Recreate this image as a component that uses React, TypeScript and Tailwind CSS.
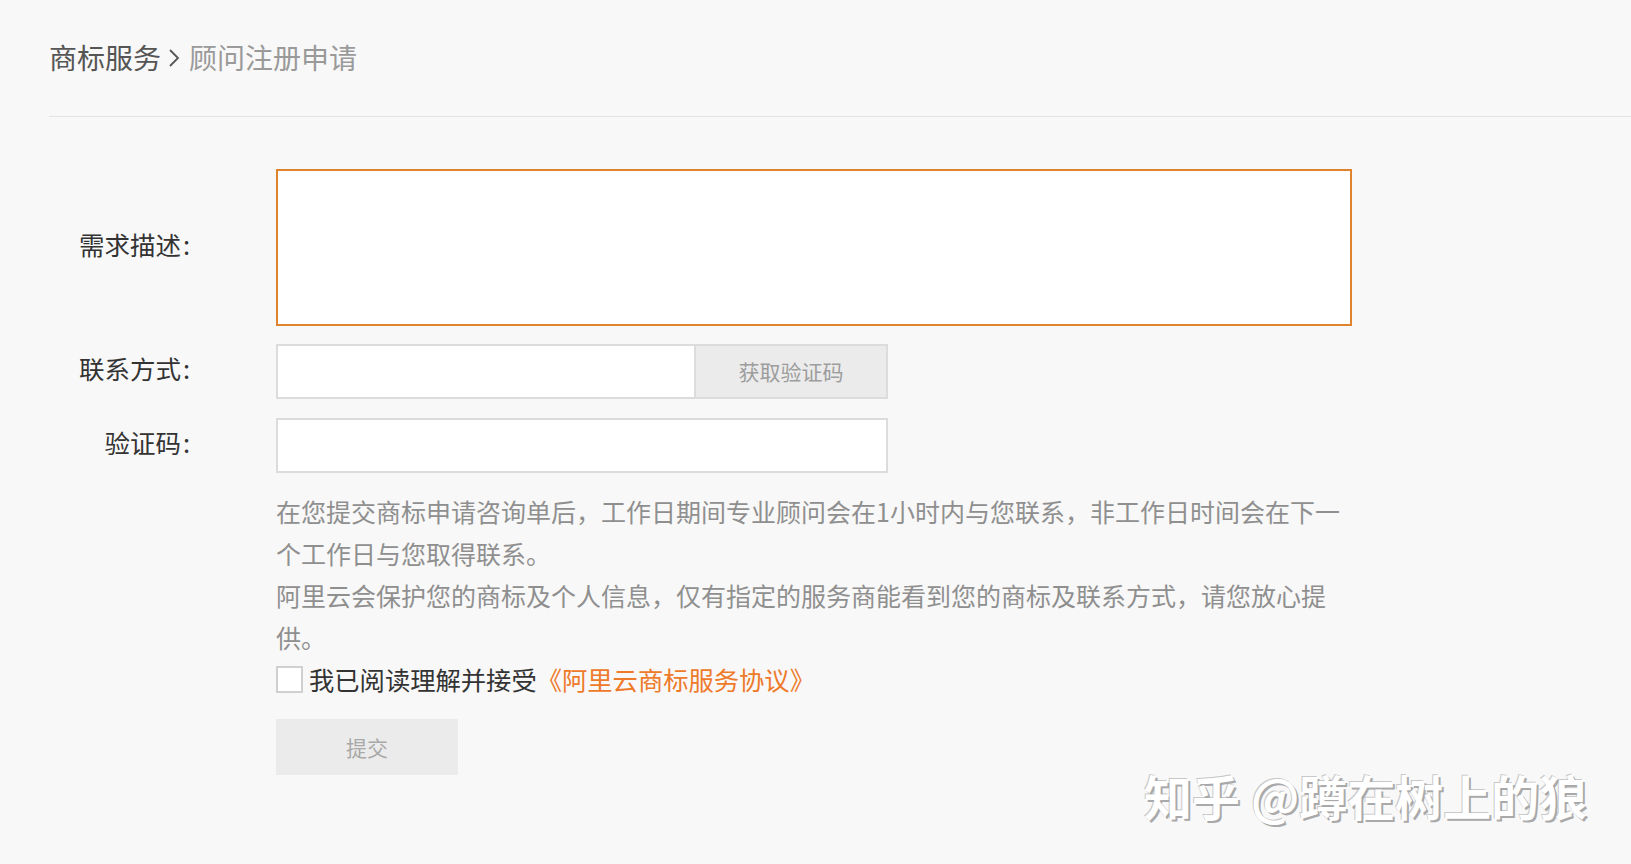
import React from "react";

const font = "font-['Microsoft_YaHei','Noto_Sans_CJK_SC',sans-serif]";

export default function App() {
  return (
    <div className={`relative min-h-[864px] w-full bg-[#f8f8f8] ${font} overflow-hidden`}>
      {/* header */}
      <div className="pl-[49px]">
        <div className="flex h-[116px] items-center pb-[2px] text-[28px] leading-none">
          <span className="text-[#555]">商标服务</span>
          <span className="ml-[7px] mr-[9px] text-[#555]">
            <svg width="12" height="22" viewBox="0 0 12 22" className="mt-[2px]">
              <path d="M2 3 L10 11 L2 19" fill="none" stroke="#555" strokeWidth="1.8" />
            </svg>
          </span>
          <span className="text-[#9a9a9a]">顾问注册申请</span>
        </div>
        <div className="h-px bg-[#e3e3e3]" />
      </div>

      {/* form */}
      <div className="mt-[52px] pl-[49px]">
        <div className="grid grid-cols-[227px_auto] gap-y-[18px]">
          <div className="flex items-center justify-end pb-[7px] pr-[86px] text-[25.5px] text-[#333]">需求描述<span className="ml-[2px]">:</span></div>
          <div className="h-[157px] w-[1076px] border-2 border-[#e0832f] bg-white" />

          <div className="flex items-center justify-end pb-[6px] pr-[86px] text-[25.5px] text-[#333]">联系方式<span className="ml-[2px]">:</span></div>
          <div className="flex h-[55px] w-[612px]">
            <div className="h-full w-[418px] border-2 border-r-0 border-[#dcdcdc] bg-white" />
            <div className="flex h-full flex-1 items-center justify-center border-2 border-[#dcdcdc] bg-[#ebebeb] text-[21px] text-[#9d9d9d]">
              获取验证码
            </div>
          </div>

          <div className="mt-[1px] flex items-center justify-end pb-[6px] pr-[86px] text-[25.5px] text-[#333]">验证码<span className="ml-[2px]">:</span></div>
          <div className="mt-[1px] h-[55px] w-[612px] border-2 border-[#dcdcdc] bg-white" />
        </div>

        <div className="ml-[227px] mt-[17px] whitespace-nowrap text-[25px] leading-[42px] text-[#8f8f8f]">
          <p>
            在您提交商标申请咨询单后，工作日期间专业顾问会在1小时内与您联系，非工作日时间会在下一
            <br />
            个工作日与您取得联系。
          </p>
          <p>
            阿里云会保护您的商标及个人信息，仅有指定的服务商能看到您的商标及联系方式，请您放心提
            <br />
            供。
          </p>
          <div className="flex items-center">
            <span className="mr-[6px] inline-block h-[27px] w-[27px] border-2 border-[#d0d0d0] bg-white" />
            <span className="text-[25.3px] text-[#333]">我已阅读理解并接受</span>
            <span className="text-[25.3px] text-[#ee7a2a]">《阿里云商标服务协议》</span>
          </div>
          <button className="mt-[19px] flex h-[56px] w-[182px] items-center justify-center bg-[#ebebeb] text-[21px] text-[#a8a8a8]">
            提交
          </button>
        </div>
      </div>

      {/* watermark */}
      <div className="absolute left-[1144px] top-[771px] whitespace-nowrap text-[48px] font-bold leading-none text-white [text-shadow:2px_2px_0_#a9a9a9,-1px_-1px_0_#c8c8c8]">
        知乎 @蹲在树上的狼
      </div>
    </div>
  );
}
